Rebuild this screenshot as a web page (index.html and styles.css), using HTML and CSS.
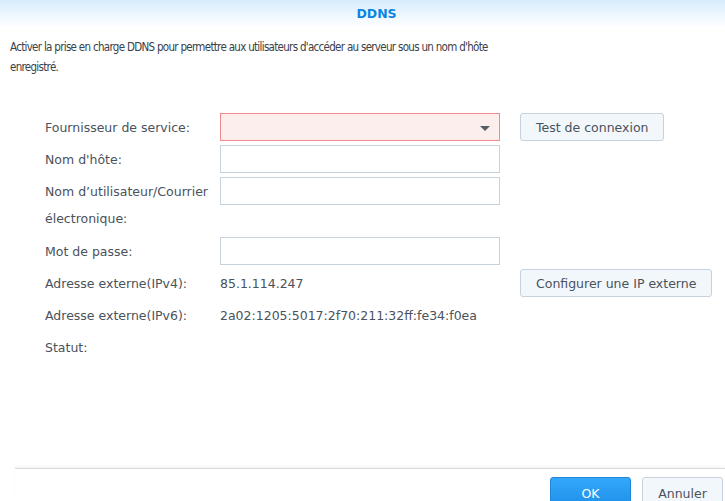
FILE: index.html
```html
<!DOCTYPE html>
<html lang="fr">
<head>
<meta charset="utf-8">
<title>DDNS</title>
<link rel="stylesheet" href="styles.css">
</head>
<body>
<div class="dialog">
  <header class="title">DDNS</header>
  <main class="body">
    <p class="desc">Activer la prise en charge DDNS pour permettre aux utilisateurs d'accéder au serveur sous un nom d'hôte enregistré.</p>
    <div class="form">
      <div class="row">
        <label class="label">Fournisseur de service:</label>
        <div class="field select invalid"><span class="arrow"></span></div>
        <button class="btn">Test de connexion</button>
      </div>
      <div class="row">
        <label class="label">Nom d'hôte:</label>
        <div class="field"></div>
      </div>
      <div class="row tall">
        <label class="label">Nom d’utilisateur/Courrier électronique:</label>
        <div class="field"></div>
      </div>
      <div class="row">
        <label class="label">Mot de passe:</label>
        <div class="field"></div>
      </div>
      <div class="row">
        <label class="label">Adresse externe(IPv4):</label>
        <div class="value">85.1.114.247</div>
        <button class="btn">Configurer une IP externe</button>
      </div>
      <div class="row">
        <label class="label">Adresse externe(IPv6):</label>
        <div class="value">2a02:1205:5017:2f70:211:32ff:fe34:f0ea</div>
      </div>
      <div class="row">
        <label class="label">Statut:</label>
        <div class="value"></div>
      </div>
    </div>
  </main>
  <footer class="footer">
    <button class="btn primary">OK</button>
    <button class="btn cancel">Annuler</button>
  </footer>
</div>
</body>
</html>
```

FILE: styles.css
```css
html, body {
  margin: 0;
  padding: 0;
  background: #ffffff;
}
body {
  font-family: "DejaVu Sans", sans-serif;
  font-size: 12.5px;
  color: #4a525b;
}
.dialog {
  width: 725px;
  height: 501px;
  display: flex;
  flex-direction: column;
  overflow: hidden;
}
.title {
  height: 28px;
  line-height: 28px;
  padding-left: 28px;
  text-align: center;
  font-weight: bold;
  color: #0a86e2;
  background: linear-gradient(to bottom, #d6ebfc 0%, #eef7ff 55%, #ffffff 100%);
}
.body {
  flex: 1;
}
.desc {
  margin: 9px 0 0 10px;
  width: 495px;
  line-height: 20px;
  font-family: "DejaVu Sans Condensed", "DejaVu Sans", sans-serif;
  font-size: 11.5px;
  letter-spacing: -0.7px;
  color: #3a4148;
}
.form {
  margin: 36px 0 0 45px;
  display: flex;
  flex-direction: column;
  gap: 4px;
}
.row {
  display: flex;
  align-items: flex-start;
}
.row.tall {
  padding-bottom: 1px;
}
.label {
  width: 175px;
  padding: 1px 10px 0 0;
  box-sizing: border-box;
  line-height: 27px;
  flex-shrink: 0;
}
.field {
  width: 280px;
  height: 28px;
  box-sizing: border-box;
  border: 1px solid #c7d2de;
  background: #fff;
  position: relative;
}
.field.invalid {
  border-color: #f28b8b;
  background: #fdeeee;
}
.arrow {
  position: absolute;
  right: 9px;
  top: 12px;
  width: 0;
  height: 0;
  border-left: 5px solid transparent;
  border-right: 5px solid transparent;
  border-top: 5px solid #555d66;
}
.value {
  width: 280px;
  padding-top: 1px;
  line-height: 27px;
  min-height: 28px;
  box-sizing: border-box;
}
.btn {
  margin-left: 20px;
  height: 28px;
  padding: 0 15px;
  font-family: inherit;
  font-size: 12.5px;
  color: #4a525b;
  background: #f2f7fc;
  border: 1px solid #c6d2de;
  border-radius: 3px;
}
.footer {
  margin-left: 15px;
  border-top: 1px solid #d9d9d9;
  box-shadow: 0 -2px 3px rgba(0, 0, 0, 0.04);
  height: 33px;
  box-sizing: border-box;
  padding: 8px 2px 0 0;
  display: flex;
  align-items: flex-start;
  justify-content: flex-end;
  gap: 11px;
  flex-shrink: 0;
}
.footer .btn {
  margin-left: 0;
  height: 32px;
  width: 81px;
  padding: 0;
  flex-shrink: 0;
}
.btn.primary {
  color: #ffffff;
  background: linear-gradient(to bottom, #33a8fa, #1e8ee8);
  border-color: #1f86d9;
}
```
